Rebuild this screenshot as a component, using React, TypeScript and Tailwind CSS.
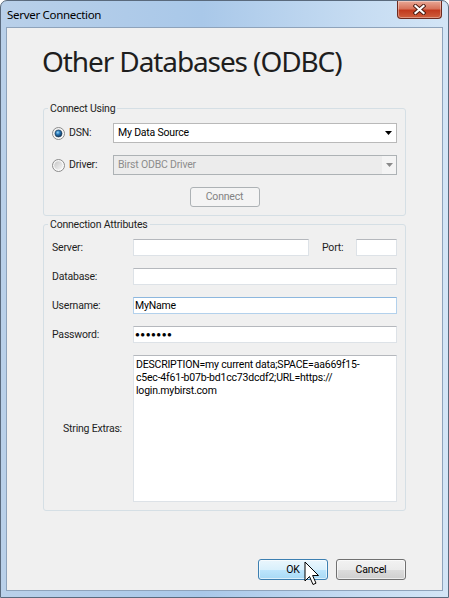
import React from "react";

function Radio({ checked, id }: { checked?: boolean; id: string }) {
  return (
    <svg width="13" height="13" viewBox="0 0 13 13" className="shrink-0">
      <defs>
        <linearGradient id={`${id}-o`} x1="0" y1="0" x2="1" y2="1">
          <stop offset="0" stopColor="#f2f2f2" />
          <stop offset="1" stopColor="#ffffff" />
        </linearGradient>
        <linearGradient id={`${id}-i`} x1="0" y1="0" x2="1" y2="1">
          <stop offset="0" stopColor="#c6c6c6" />
          <stop offset="1" stopColor="#f7f7f7" />
        </linearGradient>
        <radialGradient id={`${id}-d`} cx="0.4" cy="0.35" r="0.7">
          <stop offset="0" stopColor="#9ad6f7" />
          <stop offset="0.4" stopColor="#2a7cbd" />
          <stop offset="1" stopColor="#0b2a4c" />
        </radialGradient>
      </defs>
      <circle cx="6.5" cy="6.5" r="6" fill={`url(#${id}-o)`} stroke="#8a8a8a" strokeWidth="1" />
      <circle cx="6.5" cy="6.5" r="4.3" fill={`url(#${id}-i)`} />
      {checked && (
        <circle cx="6.5" cy="6.5" r="3.5" fill={`url(#${id}-d)`} stroke="#1c3a58" strokeWidth="0.6" />
      )}
    </svg>
  );
}

function Arrow({ color }: { color: string }) {
  return (
    <svg width="7" height="4" viewBox="0 0 7 4" className="shrink-0">
      <path d="M0 0H7L3.5 4Z" fill={color} />
    </svg>
  );
}

export default function App() {
  return (
    <div className="relative h-[598px] w-[449px] overflow-hidden bg-white">
      <div className="flex h-[598px] w-[449px] flex-col rounded-t-[7px] border border-[#5a6a7d] bg-[linear-gradient(to_right,#b9d0e9,#a9c8e9_45%,#c6dcf2_80%,#d3e5f6)]">
        <div className="flex h-[26px] shrink-0 items-start justify-between">
          <div className="pl-[6px] pt-[6px] font-['Noto_Sans',sans-serif] text-[11.5px] leading-[15px] tracking-[-0.3px] text-black">
            Server Connection
          </div>
          <div className="mr-[6px] flex h-[18px] w-[45px] items-center justify-center rounded-b-[4px] border border-t-0 border-[#6d2a1f] bg-[linear-gradient(to_bottom,#e9a896_0%,#d7735b_45%,#c23a1e_55%,#cf5f3d_100%)] shadow-[inset_0_0_0_1px_rgba(255,255,255,0.35)]">
            <svg width="13" height="11" viewBox="0 0 13 11">
              <path d="M2.5 2 L10.5 9 M10.5 2 L2.5 9" stroke="#4a1a10" strokeWidth="4" strokeLinecap="square" />
              <path d="M2.5 2 L10.5 9 M10.5 2 L2.5 9" stroke="#ffffff" strokeWidth="2.2" strokeLinecap="square" />
            </svg>
          </div>
        </div>

        <div className="mx-[5px] mb-[6px] flex flex-1 flex-col border border-[#8ea3bb] bg-[#f0f0f0] px-[36px] font-['Roboto',sans-serif] text-[10.5px] tracking-[-0.2px] text-[#1e1e1e]">
          <h1 className="-ml-[1px] mt-[16px] font-['Noto_Sans',sans-serif] text-[28px] leading-[34px] tracking-[-1.1px] text-[#1e1e1e]">
            Other Databases (ODBC)
          </h1>

          <fieldset className="mt-[24px] rounded-[3px] border border-[#d5dfe5]">
            <legend className="ml-[4px] px-[2px] leading-[13px]">Connect Using</legend>
            <div className="flex flex-col gap-[12px] px-[8px] pb-[8px] pt-[8px]">
              <div className="flex h-[20px] items-center">
                <div className="flex w-[61px] items-center gap-[4px]">
                  <Radio id="r1" checked />
                  <span>DSN:</span>
                </div>
                <div className="flex h-[20px] flex-1 items-center justify-between border border-[#b9b9b9] bg-white pl-[4px] pr-[4px]">
                  <span className="text-black">My Data Source</span>
                  <Arrow color="#000000" />
                </div>
              </div>
              <div className="flex h-[20px] items-center">
                <div className="flex w-[61px] items-center gap-[4px]">
                  <Radio id="r2" />
                  <span>Driver:</span>
                </div>
                <div className="flex h-[20px] flex-1 items-center justify-between border border-[#adb2b5] bg-[#ececec] pl-[4px]">
                  <span className="text-[#8d8d8d]">Birst ODBC Driver</span>
                  <div className="flex h-full w-[14px] items-center justify-center bg-[#f4f4f4]">
                    <Arrow color="#8a8a8a" />
                  </div>
                </div>
              </div>
              <div className="mx-auto flex h-[20px] w-[70px] items-center justify-center rounded-[3px] border border-[#adb2b5] bg-[#f4f4f4] text-[#838383]">
                Connect
              </div>
            </div>
          </fieldset>

          <fieldset className="mt-[2px] rounded-[3px] border border-[#d5dfe5]">
            <legend className="ml-[4px] px-[2px] leading-[13px]">Connection Attributes</legend>
            <div className="flex flex-col gap-[12px] px-[8px] pb-[8px] pt-[8px]">
              <div className="flex h-[17px] items-center">
                <span className="w-[81px]">Server:</span>
                <div className="h-[17px] flex-1 border border-[#dde2e7] border-t-[#b5b8bd] bg-white" />
                <span className="ml-[13px] w-[34px]">Port:</span>
                <div className="h-[17px] w-[41px] border border-[#dde2e7] border-t-[#b5b8bd] bg-white" />
              </div>
              <div className="flex h-[17px] items-center">
                <span className="w-[81px]">Database:</span>
                <div className="h-[17px] flex-1 border border-[#dde2e7] border-t-[#b5b8bd] bg-white" />
              </div>
              <div className="flex h-[17px] items-center">
                <span className="w-[81px]">Username:</span>
                <div className="flex h-[17px] flex-1 items-center border border-[#b3d1ec] border-t-[#8db7de] bg-white pl-[1px] text-black">
                  MyName
                </div>
              </div>
              <div className="flex h-[17px] items-center">
                <span className="w-[81px]">Password:</span>
                <div className="flex h-[17px] flex-1 items-center border border-[#dde2e7] border-t-[#b5b8bd] bg-white pl-[1px] text-[8px] tracking-[0.5px] text-black">
                  ●●●●●●●
                </div>
              </div>
              <div className="flex h-[147px]">
                <div className="flex w-[81px] items-center justify-center">String Extras:</div>
                <div className="flex-1 border border-[#dde2e7] border-t-[#b5b8bd] bg-white pl-[2px] pt-[2px] leading-[13px] text-black">
                  DESCRIPTION=my current data;SPACE=aa669f15-
                  <br />
                  c5ec-4f61-b07b-bd1cc73dcdf2;URL=https://
                  <br />
                  login.mybirst.com
                </div>
              </div>
            </div>
          </fieldset>

          <div className="mt-[48px] flex justify-end gap-[8px]">
            <div className="flex h-[21px] w-[70px] items-center justify-center rounded-[3px] border border-[#3c7fb1] bg-[linear-gradient(to_bottom,#eaf6fd_0%,#d9f0fc_50%,#bee6fd_50%,#a7d9f5_100%)] text-black shadow-[inset_0_0_0_1px_rgba(255,255,255,0.6)]">
              OK
            </div>
            <div className="flex h-[21px] w-[70px] items-center justify-center rounded-[3px] border border-[#707070] bg-[linear-gradient(to_bottom,#f2f2f2_0%,#ebebeb_50%,#dddddd_50%,#cfcfcf_100%)] text-black shadow-[inset_0_0_0_1px_rgba(255,255,255,0.6)]">
              Cancel
            </div>
          </div>
        </div>
      </div>

      <svg className="absolute left-[304px] top-[561px]" width="16" height="26" viewBox="0 0 16 26">
        <path
          d="M1 1 L1 20 L5.5 15.5 L9 23.5 L12 22.2 L8.6 14.5 L14.5 14.5 Z"
          fill="#ffffff"
          stroke="#000000"
          strokeWidth="1"
          strokeLinejoin="miter"
        />
      </svg>
    </div>
  );
}
